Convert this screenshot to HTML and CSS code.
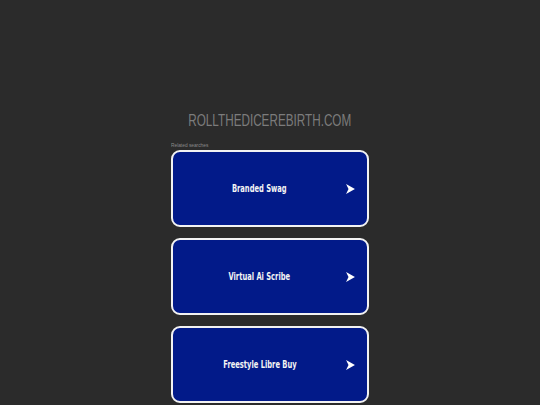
FILE: index.html
```html
<!DOCTYPE html>
<html lang="en">
<head>
<meta charset="utf-8">
<title>rollthedicerebirth.com</title>
<link rel="stylesheet" href="styles.css">
</head>
<body>
<main class="page">
  <h1 class="domain"><span class="domain-text">ROLLTHEDICEREBIRTH.COM</span></h1>
  <section class="content">
    <div class="related"><span class="related-text">Related searches</span></div>
    <ul class="links">
      <li><a class="link" href="#"><span class="label"><span class="label-text">Branded Swag</span></span><svg class="arrow" viewBox="0 0 8 9"><path d="M0 0 L8 4.5 L0 9 L2.2 4.5 Z" fill="#fff"/></svg></a></li>
      <li><a class="link" href="#"><span class="label"><span class="label-text">Virtual Ai Scribe</span></span><svg class="arrow" viewBox="0 0 8 9"><path d="M0 0 L8 4.5 L0 9 L2.2 4.5 Z" fill="#fff"/></svg></a></li>
      <li><a class="link" href="#"><span class="label"><span class="label-text">Freestyle Libre Buy</span></span><svg class="arrow" viewBox="0 0 8 9"><path d="M0 0 L8 4.5 L0 9 L2.2 4.5 Z" fill="#fff"/></svg></a></li>
    </ul>
  </section>
</main>
</body>
</html>
```
FILE: styles.css
```css
html, body {
  margin: 0;
  padding: 0;
  background: #2b2b2b;
  height: 100%;
  overflow: hidden;
}
.page {
  padding-top: 110px;
  font-family: "Liberation Sans", Arial, sans-serif;
}
.domain {
  margin: 0;
  height: 20px;
  line-height: 20px;
  font-size: 16.5px;
  font-weight: normal;
  color: #7c7c7c;
  text-align: center;
  white-space: nowrap;
}
.domain-text {
  display: inline-block;
  transform: scaleX(0.71);
  transform-origin: center;
}
.content {
  width: 198px;
  margin: 0 auto;
}
.related {
  margin-top: 10px;
  height: 10px;
  line-height: 10px;
  font-size: 6px;
  color: #8a8a8a;
  white-space: nowrap;
}
.related-text {
  display: inline-block;
  transform: scaleX(0.8);
  transform-origin: left center;
}
.links {
  list-style: none;
  margin: 0;
  padding: 0;
  display: flex;
  flex-direction: column;
  gap: 11px;
}
.link {
  box-sizing: border-box;
  height: 77px;
  display: flex;
  align-items: center;
  padding: 0 12px 0 0;
  background: #021a89;
  border: 2px solid #f2f2f2;
  border-radius: 9px;
  text-decoration: none;
}
.label {
  flex: 1;
  text-align: center;
  white-space: nowrap;
  font-family: "DejaVu Sans Condensed", "DejaVu Sans", sans-serif;
  font-weight: bold;
  font-size: 11px;
  color: #f4f4f4;
}
.label-text {
  display: inline-block;
  transform: scaleX(0.68);
  transform-origin: center;
}
.arrow {
  width: 9px;
  height: 10px;
  flex: none;
}
```
